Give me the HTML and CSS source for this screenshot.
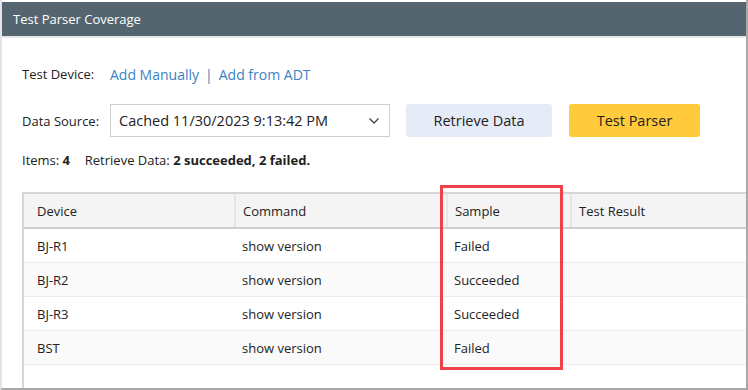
FILE: index.html
```html
<!doctype html>
<html lang="en">
<head>
    <title>Test Parser Coverage</title>
    <meta charset="utf-8" />
    <link rel="stylesheet" href="styles.css">
</head>
<body>
    <!-- Dialog panel -->
    <div class="panel">
        <div class="panel-title">Test Parser Coverage</div>

        <div class="panel-body">
            <!-- Test device links -->
            <div class="field-row device-row">
                <span class="field-label">Test Device:</span>
                <a class="link" href="#">Add Manually</a>
                <span class="link-sep">|</span>
                <a class="link" href="#">Add from ADT</a>
            </div>

            <!-- Data source + actions -->
            <div class="field-row source-row">
                <span class="field-label">Data Source:</span>
                <div class="select-box">
                    <span>Cached 11/30/2023 9:13:42 PM</span>
                    <svg class="chevron" width="12" height="8" viewBox="0 0 12 8">
                        <path d="M1.5 1.5 L6 6 L10.5 1.5" fill="none" stroke="#444" stroke-width="1.3" />
                    </svg>
                </div>
                <button class="btn btn-retrieve">Retrieve Data</button>
                <button class="btn btn-test">Test Parser</button>
            </div>

            <!-- Summary -->
            <div class="summary">
                Items: <b>4</b>
                <span class="summary-gap"></span>
                Retrieve Data: <b>2 succeeded, 2 failed.</b>
            </div>

            <!-- Result grid -->
            <div class="grid-wrap">
                <table class="grid">
                    <thead>
                        <tr>
                            <th class="col-device">Device</th>
                            <th class="col-command">Command</th>
                            <th class="col-sample">Sample</th>
                            <th>Test Result</th>
                        </tr>
                    </thead>
                    <tbody>
                        <tr><td>BJ-R1</td><td>show version</td><td>Failed</td><td></td></tr>
                        <tr><td>BJ-R2</td><td>show version</td><td>Succeeded</td><td></td></tr>
                        <tr><td>BJ-R3</td><td>show version</td><td>Succeeded</td><td></td></tr>
                        <tr><td>BST</td><td>show version</td><td>Failed</td><td></td></tr>
                    </tbody>
                </table>
                <!-- Highlight around the Sample column -->
                <div class="highlight"></div>
            </div>
        </div>
    </div>
</body>
</html>
```

FILE: styles.css
```css
body {
    margin: 0;
    font-family: 'Open Sans', 'Noto Sans', sans-serif;
    font-size: 13px;
    color: #222;
    background-color: #fff;
}

/* Panel */
.panel {
    width: 744px;
    height: 388px;
    border-left: 2px solid #e4e4e4;
    border-right: 2px solid #a8a8a8;
    border-bottom: 2px solid #a8a8a8;
    display: flex;
    flex-direction: column;
    overflow: hidden;
}

.panel-title {
    height: 34px;
    margin-top: 2px;
    background-color: #546570;
    border-bottom: 2px solid #e4e8ea;
    color: #fff;
    font-size: 13px;
    line-height: 34px;
    padding-left: 11px;
}

.panel-body {
    flex: 1;
    padding: 0 0 0 20px;
    display: flex;
    flex-direction: column;
}

.field-row {
    display: flex;
    align-items: center;
}

.field-label {
    width: 88px;
}

.device-row {
    margin-top: 26px;
    height: 20px;
}

.link {
    color: #3b82c4;
    text-decoration: none;
    font-size: 14px;
}

.link-sep {
    color: #3b82c4;
    margin: 0 6px;
    font-size: 14px;
}

.source-row {
    margin-top: 20px;
    height: 33px;
}

.select-box {
    box-sizing: border-box;
    width: 280px;
    height: 33px;
    border: 1px solid #cfcfcf;
    padding: 0 8px 0 8px;
    display: flex;
    align-items: center;
    justify-content: space-between;
    font-size: 14.5px;
    color: #222;
}

.chevron {
    margin-right: 1px;
}

.btn {
    height: 33px;
    border: none;
    border-radius: 3px;
    font-family: 'Open Sans', 'Noto Sans', sans-serif;
    font-size: 14.5px;
    color: #222;
    padding: 0;
}

.btn-retrieve {
    width: 146px;
    margin-left: 16px;
    background-color: #e5ecf8;
}

.btn-test {
    width: 131px;
    margin-left: 17px;
    background-color: #ffca3c;
}

.summary {
    margin-top: 15px;
    height: 16px;
    line-height: 16px;
    font-size: 13px;
}

.summary b {
    font-weight: 700;
}

.summary-gap {
    display: inline-block;
    width: 8px;
}

/* Grid */
.grid-wrap {
    position: relative;
    margin-top: 24px;
    flex: 1;
    border-left: 2px solid #d6d6d6;
    border-top: 2px solid #d6d6d6;
}

.grid {
    width: 100%;
    border-collapse: collapse;
    table-layout: fixed;
}

.grid th {
    height: 33px;
    background-color: #f4f4f4;
    border-bottom: 2px solid #cfcfcf;
    border-left: 2px solid #e6e6e6;
    text-align: left;
    font-weight: normal;
    padding: 0 0 0 7px;
}

.grid th:first-child {
    border-left: none;
}

.grid td {
    height: 33px;
    border-bottom: 1px solid #ececec;
    padding: 0 0 0 7px;
}

.grid th:first-child,
.grid td:first-child {
    padding-left: 13px;
}

.grid tbody tr:nth-child(even) td {
    background-color: #fafafa;
}

.col-device {
    width: 197px;
}

.col-command {
    width: 203px;
}

.col-sample {
    width: 115px;
}

.highlight {
    position: absolute;
    left: 416px;
    top: -9px;
    width: 117px;
    height: 179px;
    border: 3px solid #f0404a;
}
```
